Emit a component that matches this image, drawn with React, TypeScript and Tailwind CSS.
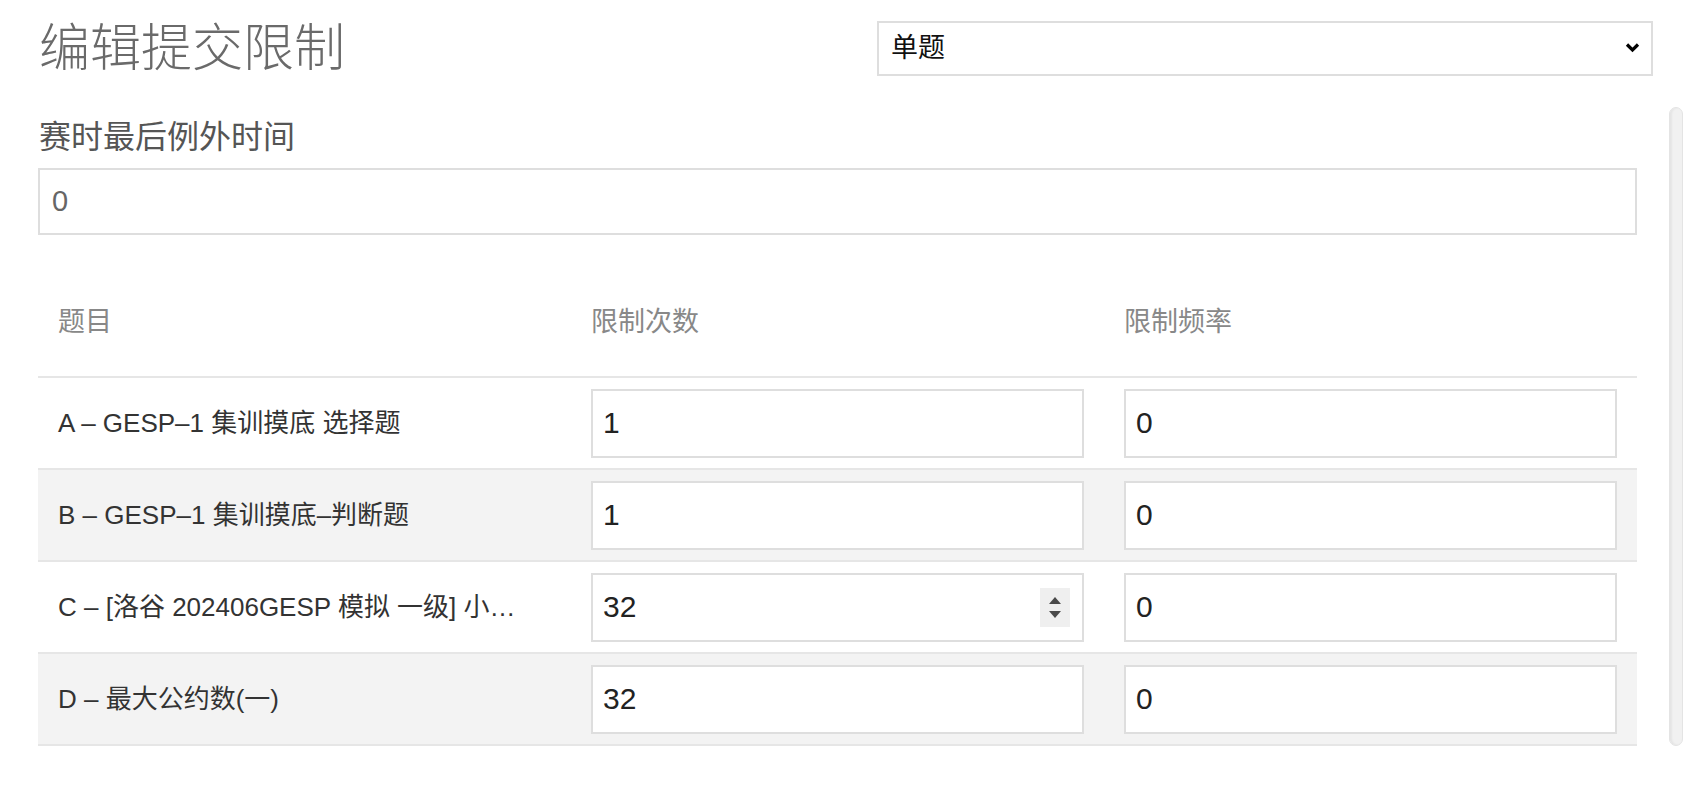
import { ChangeEvent, useState } from "react";

type Limit = {
  id: string;
  title: string;
  count: number;
  rate: number;
};

const initialLimits: Limit[] = [
  { id: "A", title: "A – GESP–1 集训摸底 选择题", count: 1, rate: 0 },
  { id: "B", title: "B – GESP–1 集训摸底–判断题", count: 1, rate: 0 },
  { id: "C", title: "C – [洛谷 202406GESP 模拟 一级] 小杨购物", count: 32, rate: 0 },
  { id: "D", title: "D – 最大公约数(一)", count: 32, rate: 0 },
];

const font = "font-['Liberation_Sans','Noto_Sans_CJK_SC',sans-serif]";

function Spinner() {
  return (
    <div className="flex h-[39px] w-[30px] flex-col items-center justify-center gap-[7px] bg-[#efefef]">
      <svg width="12" height="7" viewBox="0 0 12 7">
        <path d="M6 0 L12 7 L0 7 Z" fill="#4a4a4a" />
      </svg>
      <svg width="12" height="7" viewBox="0 0 12 7">
        <path d="M0 0 L12 0 L6 7 Z" fill="#4a4a4a" />
      </svg>
    </div>
  );
}

function NumberBox({
  value,
  onChange,
  spinner,
}: {
  value: number;
  onChange: (v: number) => void;
  spinner?: boolean;
}) {
  return (
    <div className="flex h-[69px] w-full items-center border-2 border-[#dedede] bg-white pr-[12px]">
      <input
        className={`h-full min-w-0 flex-1 bg-transparent pl-[10px] text-[30px] text-[#222] outline-none ${font}`}
        value={value}
        onChange={(e: ChangeEvent<HTMLInputElement>) => onChange(Number(e.target.value) || 0)}
      />
      {spinner && <Spinner />}
    </div>
  );
}

export default function App() {
  const [mode, setMode] = useState("single");
  const [extraTime, setExtraTime] = useState("0");
  const [limits, setLimits] = useState<Limit[]>(initialLimits);

  const update = (id: string, key: "count" | "rate", v: number) =>
    setLimits((ls) => ls.map((l) => (l.id === id ? { ...l, [key]: v } : l)));

  return (
    <div className={`h-[812px] w-[1706px] overflow-hidden bg-white ${font}`}>
      {/* header: title + mode select */}
      <div className="flex h-[97px] items-center justify-between pl-[39px] pr-[53px]">
        <h2 className="text-[51px] font-light leading-[60px] text-[#6a6a6a]">编辑提交限制</h2>
        <div className="relative h-[55px] w-[776px]">
          <select
            value={mode}
            onChange={(e) => setMode(e.target.value)}
            className={`h-full w-full appearance-none border-2 border-[#dedede] bg-white pl-[12px] text-[27px] text-[#111] outline-none ${font}`}
          >
            <option value="single">单题</option>
            <option value="all">全部</option>
          </select>
          <svg
            className="pointer-events-none absolute right-[13px] top-[21px]"
            width="15"
            height="11"
            viewBox="0 0 15 11"
          >
            <path d="M2 2.5 L7.5 8 L13 2.5" fill="none" stroke="#000" strokeWidth="3.2" />
          </svg>
        </div>
      </div>

      {/* scrolling body */}
      <div className="flex pl-[38px]">
        <div className="w-[1599px] pt-[19px]">
          <label className="block pl-[1px] text-[32px] font-normal leading-[43px] text-[#555]">
            赛时最后例外时间
          </label>
          <input
            className={`mt-[9px] block h-[67px] w-full border-2 border-[#dedede] pl-[12px] text-[29px] text-[#666] outline-none ${font}`}
            value={extraTime}
            onChange={(e) => setExtraTime(e.target.value)}
          />

          <div className="mt-[33px]">
            <div className="grid h-[110px] grid-cols-3 items-center border-b-2 border-[#e6e6e6] text-[27px] text-[#888]">
              <div className="pl-[20px]">题目</div>
              <div className="pl-[20px]">限制次数</div>
              <div className="pl-[20px]">限制频率</div>
            </div>
            {limits.map((l, i) => (
              <div
                key={l.id}
                className={`grid h-[92px] grid-cols-3 items-center border-b-2 border-[#e6e6e6] ${
                  i % 2 === 1 ? "bg-[#f3f3f3]" : "bg-white"
                }`}
              >
                <div className="truncate pl-[20px] pr-[40px] text-[26px] text-[#333]">{l.title}</div>
                <div className="px-[20px]">
                  <NumberBox value={l.count} onChange={(v) => update(l.id, "count", v)} spinner={l.id === "C"} />
                </div>
                <div className="px-[20px]">
                  <NumberBox value={l.rate} onChange={(v) => update(l.id, "rate", v)} />
                </div>
              </div>
            ))}
          </div>
        </div>

        {/* scrollbar thumb */}
        <div className="ml-[32px] mt-[10px] w-[14px] rounded-full border border-[#e4e4e4] bg-[#f1f1f1] shadow-[inset_2px_0_2px_rgba(0,0,0,0.05)]" />
      </div>
    </div>
  );
}
